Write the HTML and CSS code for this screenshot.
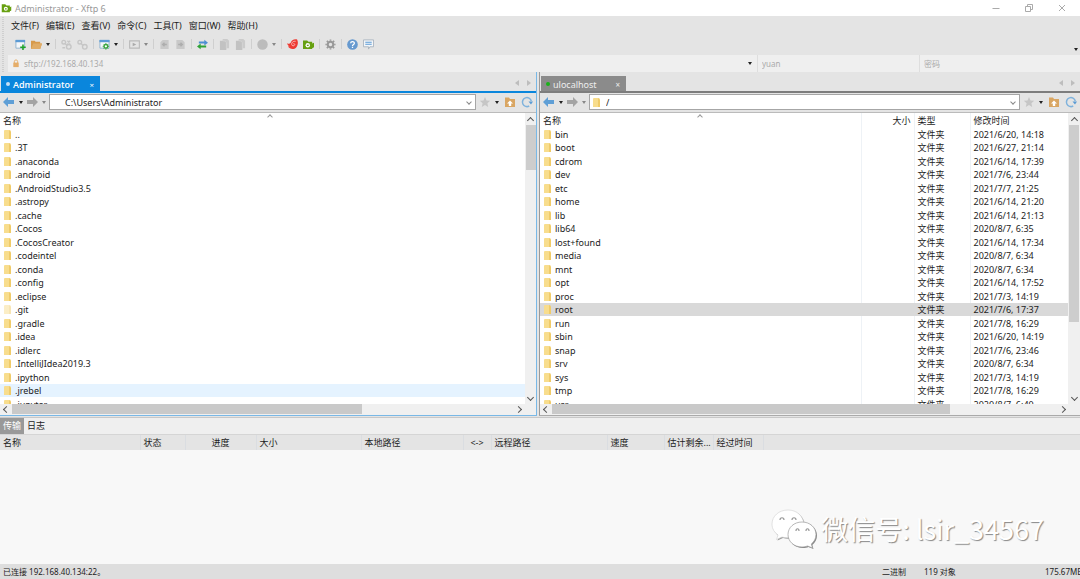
FILE: index.html
```html
<!DOCTYPE html>
<html lang="zh-CN">
<head>
<meta charset="utf-8">
<title>Administrator - Xftp 6</title>
<link rel="stylesheet" href="styles.css">
</head>
<body>
<svg class="defs" aria-hidden="true">
  <symbol id="left" viewBox="0 0 12 12"><path d="M0 6 5 1v3h6v4H5v3z" fill="currentColor"/></symbol>
  <symbol id="right" viewBox="0 0 12 12"><path d="M12 6 7 1v3H1v4h6v3z" fill="currentColor"/></symbol>
  <symbol id="star" viewBox="0 0 12 12"><path d="m6 1 1.500 3.400 3.700.4-2.800 2.500.8 3.700L6 9.100l-3.200 1.900.8-3.700L.8 4.800l3.700-.4z" fill="#c6c6c6"/></symbol>
  <symbol id="up" viewBox="0 0 12 12"><path d="M1 1.500h4l1 1.500h5v8H1z" fill="#d9a663"/><path d="m6 4.500 3 3H7.200V10H4.800V7.500H3z" fill="#fff"/></symbol>
  <symbol id="reload" viewBox="0 0 12 12"><path d="M8.200 10A4.500 4.500 0 1 1 10.300 5" fill="none" stroke="#7fb2dc" stroke-width="1.500"/><path d="M7.500 5.500H12L10 8.500z" fill="#5a9bd4"/></symbol>
  <symbol id="chain" viewBox="0 0 12 12"><g fill="none" stroke="#c6c6c6" stroke-width="1.500"><circle cx="3" cy="3.500" r="2"/><circle cx="8.500" cy="8.500" r="2.500"/><path d="m4.500 5 2 2"/></g></symbol>
  <symbol id="unchain" viewBox="0 0 12 12"><g fill="none" stroke="#c6c6c6" stroke-width="1.500"><circle cx="3" cy="3.500" r="2"/><circle cx="8.500" cy="8.500" r="2.500"/><path d="m4.500 5 2 2M7 2l3 3M10 2 7 5M1.500 9.500h3"/></g></symbol>
  <symbol id="doc" viewBox="0 0 12 12"><path d="M1.500 1H8l2.500 2.500V11h-9z" fill="#c9c9c9"/><path d="M3.500 6h4M6 4l2 2-2 2" fill="none" stroke="#adadad" stroke-width="1.500"/></symbol>
  <symbol id="copy" viewBox="0 0 12 12"><path d="M4 0h5l2 2v8H4z" fill="#cbcbcb"/><path d="M1 2h5l2 2v8H1z" fill="#c2c2c2"/><path d="M4 2h2l2 2v6" fill="none" stroke="#d4d4d4"/></symbol>
  <symbol id="folder-green" viewBox="0 0 12 12"><path d="M0 1.500h4.500L6 3h4v2l2-1v5l-2 1v1H0z" fill="#67a010"/><circle cx="5.200" cy="6.800" r="2.400" fill="#fff"/><path d="M4.200 6.200h2v1.500h-2z" fill="#67a010"/></symbol>
</svg>

<header class="titlebar">
  <svg class="app" viewBox="0 0 12 12"><use href="#folder-green"/></svg>
  <h1>Administrator - Xftp 6</h1>
  <div class="window-buttons">
    <button aria-label="最小化"><svg viewBox="0 0 12 12"><path d="M2.500 6.500h7"/></svg></button>
    <button aria-label="还原"><svg viewBox="0 0 12 12"><path d="M2.500 4.500h5v5h-5zM4.500 4V2.500h5v5H8"/></svg></button>
    <button aria-label="关闭"><svg viewBox="0 0 12 12"><path d="m3 3 6 6M9 3 3 9"/></svg></button>
  </div>
</header>

<div class="bars">
  <nav class="menubar">
    <button>文件(F)</button><button>编辑(E)</button><button>查看(V)</button><button>命令(C)</button><button>工具(T)</button><button>窗口(W)</button><button>帮助(H)</button>
  </nav>
  <div class="toolbar" role="toolbar">
    <button class="tool" aria-label="新建"><svg viewBox="0 0 12 12"><path d="M1 1.500h9.500V10H1z" fill="#f4f7fa" stroke="#8fb2cf"/><path d="M.5 1h10.500v2.500H.5z" fill="#5b9bd5"/><path d="M8.700 6v6M5.700 9h6" stroke="#1fa32b" stroke-width="1.700"/></svg></button>
    <button class="tool" aria-label="打开"><svg viewBox="0 0 12 12"><path d="M0 2h4l1 1h5v2h2l-2 6H0z" fill="#d79a4b"/><path d="M2.500 5H12l-2 6H0z" fill="#e0ac66"/></svg></button>
    <button class="caret" aria-label="打开选项"></button><i class="sep"></i>
    <button class="tool" aria-label="断开"><svg><use href="#unchain"/></svg></button>
    <button class="tool" aria-label="重新连接"><svg><use href="#chain"/></svg></button><i class="sep"></i>
    <button class="tool" aria-label="属性"><svg viewBox="0 0 12 12"><path d="M1 1.500h10V10H1z" fill="#f4f7fa" stroke="#8fb2cf"/><path d="M.5 1h11v2.500H.5z" fill="#5b9bd5"/><circle cx="7.500" cy="8" r="2" fill="#fff" stroke="#3ba640" stroke-width="1.500"/><path d="M7.500 4.500v1.300M7.500 10.200v1.500M4 8h1.300M9.700 8H11M5.200 5.700l.9.900M9 9.500l.9.900M9.900 5.700l-.9.900M6 9.500l-.9.900" stroke="#3ba640"/></svg></button>
    <button class="caret" aria-label="属性选项"></button><i class="sep"></i>
    <button class="tool" aria-label="运行"><svg viewBox="0 0 12 12"><path d="M.7 2h10.600v8H.7z" fill="none" stroke="#b9b9b9" stroke-width="1.200"/><path d="m4 4 4 2-4 2z" fill="#aaa"/></svg></button>
    <button class="caret dim" aria-label="运行选项"></button><i class="sep"></i>
    <button class="tool" aria-label="上传"><svg class="flip"><use href="#doc"/></svg></button>
    <button class="tool" aria-label="下载"><svg><use href="#doc"/></svg></button><i class="sep"></i>
    <button class="tool" aria-label="同步"><svg viewBox="0 0 12 12"><path d="M2 2.700h6V.8L12 4 8 7V5H2z" fill="#4c8ed2"/><path d="M10 7H4V5L0 8.300l4 3V9.400h6z" fill="#2fa336"/></svg></button><i class="sep"></i>
    <button class="tool" aria-label="复制"><svg><use href="#copy"/></svg></button>
    <button class="tool" aria-label="粘贴"><svg><use href="#copy"/></svg></button><i class="sep"></i>
    <button class="tool" aria-label="查看方式"><svg viewBox="0 0 12 12"><circle cx="6" cy="6" r="5.700" fill="#bcbcbc"/></svg></button>
    <button class="caret dim" aria-label="查看选项"></button><i class="sep"></i>
    <button class="tool" aria-label="Xshell"><svg viewBox="0 0 12 12"><path d="M0 4.500c2 1 3 .8 4-.5C5 1.500 7 0 11 .5c1.500 3 1 6.500-1 8.800C7.500 12 3 11.500 1 8l2 .2C1.500 7.500.5 6 0 4.500z" fill="#ee3a32"/><path d="M9.500 2.500C6.500 1.800 5 4 5 5.800s3 2.400 3.500.5c.2-1.300-1.300-1.700-1.800-.8" fill="none" stroke="#fbd0cd" stroke-width=".8"/></svg></button>
    <button class="tool" aria-label="Xftp"><svg><use href="#folder-green"/></svg></button><i class="sep"></i>
    <button class="tool" aria-label="选项"><svg viewBox="0 0 12 12"><circle cx="6" cy="6" r="3" fill="none" stroke="#999" stroke-width="2.200"/><path d="M6 .5V2M6 10v1.500M.5 6H2M10 6h1.500M2 2l1.200 1.200M8.800 8.800 10 10M10 2 8.800 3.200M3.200 8.800 2 10" stroke="#999" stroke-width="1.800"/></svg></button><i class="sep"></i>
    <button class="tool" aria-label="帮助"><svg viewBox="0 0 12 12"><circle cx="6" cy="6" r="5.800" fill="#6699cf"/><path d="M4 4.700c0-2.600 4-2.500 4-.2C8 6 6 6 6 7.500M6 8.500v1.300" fill="none" stroke="#fff" stroke-width="1.400"/></svg></button>
    <button class="tool" aria-label="反馈"><svg viewBox="0 0 12 12"><path d="M.5 1h11v7.500h-4L6 11V8.500H.5z" fill="#f3f6f9" stroke="#a9b4be"/><path d="M2.500 3.500h7M2.500 5.800h7" stroke="#5b9bd5" stroke-width="1.200"/></svg></button>
    <button class="caret more" aria-label="更多"></button>
  </div>
  <form class="address">
    <label class="host"><svg viewBox="0 0 8 10"><path d="M1 4h6v5H1z" fill="#e5ad69"/><path d="M2.200 4.500v-2c0-2 3.600-2 3.600 0v2" fill="none" stroke="#e5ad69"/></svg><input aria-label="主机" value="sftp://192.168.40.134"><button type="button" class="caret" aria-label="主机列表"></button></label>
    <input class="user" aria-label="用户名" value="yuan">
    <input class="password" type="password" aria-label="密码" placeholder="密码">
  </form>
</div>

<main class="panes">
  <section class="pane local">
    <div class="tabs"><button class="tab"><i class="dot"></i><span>Administrator</span><b>×</b></button><div class="pager"><button class="prev" aria-label="上一个"></button><button class="next" aria-label="下一个"></button></div></div>
    <div class="nav">
      <button class="arrow blue" aria-label="后退"><svg><use href="#left"/></svg></button><button class="caret" aria-label="后退记录"></button>
      <button class="arrow" aria-label="前进"><svg><use href="#right"/></svg></button><button class="caret dim" aria-label="前进记录"></button>
      <div class="path"><input aria-label="本地路径" value="C:\Users\Administrator"><button aria-label="路径列表"><i class="chev down"></i></button></div>
      <button class="tool" aria-label="收藏"><svg><use href="#star"/></svg></button><button class="caret" aria-label="收藏列表"></button>
      <button class="tool" aria-label="上级"><svg><use href="#up"/></svg></button><button class="tool" aria-label="刷新"><svg><use href="#reload"/></svg></button>
    </div>
    <div class="listing">
      <div class="files">
        <i class="chev sort"></i>
        <table>
          <thead><tr><th>名称</th></tr></thead>
          <tbody>
            <tr><td><i class="folder"></i>..</td></tr>
            <tr><td><i class="folder"></i>.3T</td></tr>
            <tr><td><i class="folder"></i>.anaconda</td></tr>
            <tr><td><i class="folder"></i>.android</td></tr>
            <tr><td><i class="folder"></i>.AndroidStudio3.5</td></tr>
            <tr><td><i class="folder"></i>.astropy</td></tr>
            <tr><td><i class="folder"></i>.cache</td></tr>
            <tr><td><i class="folder"></i>.Cocos</td></tr>
            <tr><td><i class="folder"></i>.CocosCreator</td></tr>
            <tr><td><i class="folder"></i>.codeintel</td></tr>
            <tr><td><i class="folder"></i>.conda</td></tr>
            <tr><td><i class="folder"></i>.config</td></tr>
            <tr><td><i class="folder"></i>.eclipse</td></tr>
            <tr><td><i class="folder faint"></i>.git</td></tr>
            <tr><td><i class="folder"></i>.gradle</td></tr>
            <tr><td><i class="folder"></i>.idea</td></tr>
            <tr><td><i class="folder"></i>.idlerc</td></tr>
            <tr><td><i class="folder"></i>.IntelliJIdea2019.3</td></tr>
            <tr><td><i class="folder"></i>.ipython</td></tr>
            <tr class="hover"><td><i class="folder"></i>.jrebel</td></tr>
            <tr><td><i class="folder"></i>.jupyter</td></tr>
          </tbody>
        </table>
      </div>
      <div class="vbar"><i class="chev up"></i><div class="track"><div class="thumb"></div></div><i class="chev down"></i></div>
    </div>
    <div class="hbar"><i class="chev back"></i><div class="track"><div class="thumb"></div></div><i class="chev fwd"></i></div>
  </section>

  <section class="pane remote">
    <div class="tabs"><button class="tab"><i class="dot"></i><span>ulocalhost</span><b>×</b></button><div class="pager"><button class="prev" aria-label="上一个"></button><button class="next" aria-label="下一个"></button></div></div>
    <div class="nav">
      <button class="arrow blue" aria-label="后退"><svg><use href="#left"/></svg></button><button class="caret" aria-label="后退记录"></button>
      <button class="arrow" aria-label="前进"><svg><use href="#right"/></svg></button><button class="caret dim" aria-label="前进记录"></button>
      <div class="path"><i class="folder"></i><input aria-label="远程路径" value="/"><button aria-label="路径列表"><i class="chev down"></i></button></div>
      <button class="tool" aria-label="收藏"><svg><use href="#star"/></svg></button><button class="caret" aria-label="收藏列表"></button>
      <button class="tool" aria-label="上级"><svg><use href="#up"/></svg></button><button class="tool" aria-label="刷新"><svg><use href="#reload"/></svg></button>
    </div>
    <div class="listing">
      <div class="files">
        <i class="chev sort"></i>
        <table>
          <colgroup><col><col class="c-size"><col class="c-type"><col class="c-time"></colgroup>
          <thead><tr><th>名称</th><th>大小</th><th>类型</th><th>修改时间</th></tr></thead>
          <tbody>
            <tr><td><i class="folder"></i>bin</td><td></td><td>文件夹</td><td>2021/6/20, 14:18</td></tr>
            <tr><td><i class="folder"></i>boot</td><td></td><td>文件夹</td><td>2021/6/27, 21:14</td></tr>
            <tr><td><i class="folder"></i>cdrom</td><td></td><td>文件夹</td><td>2021/6/14, 17:39</td></tr>
            <tr><td><i class="folder"></i>dev</td><td></td><td>文件夹</td><td>2021/7/6, 23:44</td></tr>
            <tr><td><i class="folder"></i>etc</td><td></td><td>文件夹</td><td>2021/7/7, 21:25</td></tr>
            <tr><td><i class="folder"></i>home</td><td></td><td>文件夹</td><td>2021/6/14, 21:20</td></tr>
            <tr><td><i class="folder"></i>lib</td><td></td><td>文件夹</td><td>2021/6/14, 21:13</td></tr>
            <tr><td><i class="folder"></i>lib64</td><td></td><td>文件夹</td><td>2020/8/7, 6:35</td></tr>
            <tr><td><i class="folder"></i>lost+found</td><td></td><td>文件夹</td><td>2021/6/14, 17:34</td></tr>
            <tr><td><i class="folder"></i>media</td><td></td><td>文件夹</td><td>2020/8/7, 6:34</td></tr>
            <tr><td><i class="folder"></i>mnt</td><td></td><td>文件夹</td><td>2020/8/7, 6:34</td></tr>
            <tr><td><i class="folder"></i>opt</td><td></td><td>文件夹</td><td>2021/6/14, 17:52</td></tr>
            <tr><td><i class="folder"></i>proc</td><td></td><td>文件夹</td><td>2021/7/3, 14:19</td></tr>
            <tr class="selected"><td><i class="folder"></i>root</td><td></td><td>文件夹</td><td>2021/7/6, 17:37</td></tr>
            <tr><td><i class="folder"></i>run</td><td></td><td>文件夹</td><td>2021/7/8, 16:29</td></tr>
            <tr><td><i class="folder"></i>sbin</td><td></td><td>文件夹</td><td>2021/6/20, 14:19</td></tr>
            <tr><td><i class="folder"></i>snap</td><td></td><td>文件夹</td><td>2021/7/6, 23:46</td></tr>
            <tr><td><i class="folder"></i>srv</td><td></td><td>文件夹</td><td>2020/8/7, 6:34</td></tr>
            <tr><td><i class="folder"></i>sys</td><td></td><td>文件夹</td><td>2021/7/3, 14:19</td></tr>
            <tr><td><i class="folder"></i>tmp</td><td></td><td>文件夹</td><td>2021/7/8, 16:29</td></tr>
            <tr><td><i class="folder"></i>usr</td><td></td><td>文件夹</td><td>2020/8/7, 6:40</td></tr>
          </tbody>
        </table>
      </div>
      <div class="vbar"><i class="chev up"></i><div class="track"><div class="thumb"></div></div><i class="chev down"></i></div>
    </div>
    <div class="hbar"><i class="chev back"></i><div class="track"><div class="thumb"></div></div><i class="chev fwd"></i></div>
  </section>
</main>

<section class="transfers">
  <div class="log-tabs"><button class="active">传输</button><button>日志</button></div>
  <table>
    <colgroup><col class="w-name"><col class="w-state"><col class="w-progress"><col class="w-size"><col class="w-local"><col class="w-dir"><col class="w-remote"><col class="w-speed"><col class="w-left"><col class="w-time"><col></colgroup>
    <thead><tr><th>名称</th><th>状态</th><th class="mid">进度</th><th>大小</th><th>本地路径</th><th class="mid">&lt;-&gt;</th><th>远程路径</th><th>速度</th><th>估计剩余...</th><th>经过时间</th><th></th></tr></thead>
  </table>
  <div class="watermark">
    <svg viewBox="0 0 46 40"><g fill="#999"><path d="M18 2C9 2 2 8 2 16c0 5 2.500 8.500 6 11l-1.500 4.500L12 29c7 2 21 0 22-13C33 8 27 2 18 2z"/></g><g fill="#fff" stroke="#d0d0d0" stroke-width=".6"><path d="M17 1C8 1 1 7 1 15c0 5 2.500 8.500 6 11l-1.500 4.500L11 28c7 2 21 0 22-13C32 7 26 1 17 1z"/></g><path d="M32 14c-8 0-14 5.500-14 12.500S24 39 32 39c2 0 4-.3 5.500-1l5 2-1.200-4c3-2.500 4.700-5.500 4.700-9.500C46 19.500 40 14 32 14z" fill="#888"/><path d="M31 13c-8 0-14 5.500-14 12.500S23 38 31 38c2 0 4-.3 5.500-1l5 2-1.200-4c3-2.500 4.700-5.500 4.700-9.500C45 18.500 39 13 31 13z" fill="#fff" stroke="#999" stroke-width=".7"/><g fill="none" stroke="#999" stroke-width="1.200"><path d="M9 11c0-3 4-3 4 0M21 11c0-3 4-3 4 0M25 22c0-3 3-3 3 0M35 22c0-3 3-3 3 0"/></g></svg>
    <span>微信号: lsir_34567</span>
  </div>
</section>

<footer class="status"><span class="grow">已连接 192.168.40.134:22。</span><span class="mode">二进制</span><span class="count">119 对象</span><span class="bytes">175.67MB</span></footer>
</body>
</html>
```

FILE: styles.css
```css
* { box-sizing: border-box; }

body {
  margin: 0;
  height: 100vh;
  display: flex;
  flex-direction: column;
  overflow: hidden;
  background: #e4e4e4;
  color: #1c1c1c;
  font: 9px/13px "Noto Sans", "Noto Sans CJK SC", sans-serif;
}

button, input {
  margin: 0;
  padding: 0;
  border: 0;
  background: none;
  color: inherit;
  font: inherit;
  min-width: 0;
}

button { flex: none; }
svg { display: block; width: 12px; height: 12px; }
.defs { position: absolute; width: 0; height: 0; }
.flip { transform: scaleX(-1); }

/* Title bar */
.titlebar {
  display: flex;
  align-items: center;
  height: 16px;
  padding-left: 1px;
  gap: 3px;
  background: #fff;
  color: #999;
}
.titlebar h1 { flex: 1; margin: 0; font-size: 9px; font-weight: 400; }
.app { width: 11px; height: 10px; }
.window-buttons { display: flex; padding-right: 2px; }
.window-buttons button { width: 33px; display: flex; justify-content: center; }
.window-buttons path { fill: none; stroke: #aaa; }

/* Menu, toolbar, address */
.bars {
  flex: none;
  padding-left: 8px;
  background: repeating-linear-gradient(#e4e4e4 0 1px, #cfcfcf 1px 2px) 2px 0 / 2px 100% no-repeat;
}
.menubar { display: flex; height: 17px; gap: 7px; padding: 2px 0 0 3px; }
.toolbar { display: flex; align-items: center; height: 22px; padding-left: 4px; }
.tool { width: 16px; display: flex; justify-content: center; }
.toolbar svg { width: 11px; height: 11px; }
.sep { flex: none; width: 6px; height: 10px; background: linear-gradient(#cfcfcf, #cfcfcf) center / 1px 100% no-repeat; }
.caret { width: 8px; height: 12px; display: flex; align-items: center; justify-content: center; }
.caret::after { content: ""; border: 2px solid transparent; border-top: 3px solid #222; border-bottom: 0; }
.caret.dim::after { border-top-color: #888; }
.more { margin-left: auto; align-self: flex-end; }
.address {
  display: grid;
  grid-template-columns: 749fr 162fr 161fr;
  height: 17px;
  background: #efefef;
  color: #aaa;
  font-size: 8px;
}
.host { display: flex; align-items: center; gap: 4px; padding: 0 3px 0 4px; }
.host svg { width: 8px; height: 9px; }
.host input { flex: 1; }
.user, .password { border-left: 1px solid #dedede; padding-left: 4px; }
.password::placeholder { color: #aaa; }

/* File panes */
.panes { flex: 345 1 0; min-height: 0; display: grid; grid-template-columns: 537fr 541fr; gap: 2px; padding-bottom: 1px; }
.pane { min-width: 0; min-height: 0; display: flex; flex-direction: column; border-right: 1px solid #9a9a9a; border-bottom: 1px solid #aaa; --accent: #8b8b8b; }
.local { border-color: #79b8e6; --accent: #0a86dc; }
.remote { border-left: 1px solid #9a9a9a; border-right: 0; }
.tabs { flex: none; display: flex; align-items: flex-end; height: 21px; padding-left: 1px; border-bottom: 2px solid var(--accent); }
.remote .tabs { border-color: #7d7d7d; }
.tab { display: flex; align-items: center; gap: 3px; width: 99px; height: 15px; padding: 1px 6px 0 5px; background: var(--accent); color: #fff; text-align: left; }
.remote .tab { width: 85px; color: #eee; }
.local .tab { font-family: "Open Sans", sans-serif; font-weight: 600; }
.tab span { flex: 1; }
.tab b { font-weight: 400; font-size: 8px; }
.dot { width: 4px; height: 4px; border-radius: 50%; background: #c5dff5; }
.remote .dot { background: #19b219; }
.pager { display: flex; gap: 8px; margin-left: auto; padding: 0 5px 5px 0; }
.prev, .next { border: 3px solid transparent; }
.prev { border-left: 0; border-right: 4px solid #bdbdbd; }
.next { border-right: 0; border-left: 4px solid #bdbdbd; }
.nav { flex: none; display: flex; align-items: center; height: 20px; padding: 0 1px 1px 3px; border-bottom: 1px solid #bbb; }
.nav .tool { width: 17px; }
.arrow { width: 12px; color: #a4a4a4; }
.arrow.blue { color: #5f9fd6; }
.nav .arrow + .caret { width: 11px; }
.path { flex: 1; min-width: 0; display: flex; align-items: center; height: 16px; background: #fff; border: 1px solid #a6a6a6; }
.path input { flex: 1; padding-left: 15px; }
.remote .path input { padding-left: 6px; }
.remote .path { padding-left: 3px; }
.path button { width: 12px; height: 13px; display: flex; justify-content: center; align-items: center; }
.folder { display: inline-block; flex: none; width: 7px; height: 9px; background: linear-gradient(90deg, #f8dd8d 0 5px, #f0cb69 5px 7px); border-radius: 1px 2px 0 0; }
.faint { opacity: .5; }
.listing { flex: 1; min-height: 0; display: flex; background: #fff; }
.files { position: relative; flex: 1; overflow: hidden; }
table { width: 100%; table-layout: fixed; border-collapse: collapse; }
th { padding: 0 0 0 3px; font-weight: 400; text-align: left; white-space: nowrap; overflow: hidden; }
td { padding: 0 0 0 3px; white-space: nowrap; }
.files th { height: 14px; }
.files tr:nth-child(odd) { height: 14px; }
.files tr:nth-child(even) { height: 13px; }
.files td .folder { margin-right: 4px; vertical-align: -1px; }
.files td:first-child { padding-left: 4px; }
.c-size { width: 53px; }
.c-type { width: 56px; }
.c-time { width: 98px; }
.remote td + td, .remote th + th { border-left: 1px solid #eef2f6; }
.remote .selected td { border-color: #d9d9d9; }
.remote th:nth-child(2) { text-align: right; padding-right: 3px; }
.hover { background: #e5f3ff; }
.selected { background: #d9d9d9; }

/* Scroll bars */
.chev { flex: none; display: block; width: 5px; height: 5px; border: solid #555; border-width: 1px 0 0 1px; transform: rotate(45deg); }
.chev.down { transform: rotate(225deg); }
.chev.back { transform: rotate(-45deg); }
.chev.fwd { transform: rotate(135deg); }
.path .chev { width: 4px; height: 4px; border-color: #888; }
.sort { position: absolute; left: 51%; top: 2px; width: 4px; height: 4px; border-color: #999; }
.remote .sort { left: 30%; }
.vbar { flex: none; width: 11px; display: flex; flex-direction: column; align-items: center; padding: 5px 0 4px; background: #f0f0f0; }
.remote .vbar { width: 12px; }
.vbar .track { flex: 1; width: 10px; padding: 2px 0 4px; }
.vbar .thumb { height: 17%; background: #cdcdcd; }
.remote .vbar .thumb { height: 74%; }
.hbar { flex: none; height: 11px; display: flex; align-items: center; padding: 0 15px 0 4px; background: #f0f0f0; }
.hbar .track { flex: 1; height: 10px; padding: 0 4px 0 3px; }
.hbar .thumb { width: 70%; height: 10px; background: #c9c9c9; }
.remote .hbar .thumb { width: 79%; }

/* Transfer list */
.transfers { position: relative; flex: 147 1 0; min-height: 0; background: #f8f8f8; border-top: 1px solid #c8c8c8; }
.log-tabs { display: flex; height: 17px; background: #efefef; border-bottom: 1px solid #d5d5d5; }
.log-tabs button { width: 24px; }
.log-tabs .active { background: #999; color: #fff; }
.transfers table { background: #e4e4e4; }
.transfers th { height: 15px; }
.transfers th + th { border-left: 1px solid #dadde1; }
.transfers .mid { text-align: center; padding: 0; }
.w-name { width: 140px; }
.w-state { width: 45px; }
.w-progress { width: 71px; }
.w-size { width: 105px; }
.w-local { width: 102px; }
.w-dir { width: 28px; }
.w-remote { width: 116px; }
.w-speed { width: 57px; }
.w-left { width: 49px; }
.w-time { width: 50px; }
.watermark { position: absolute; right: 36px; bottom: 15px; display: flex; align-items: center; gap: 4px; }
.watermark svg { width: 46px; height: 40px; }
.watermark span { color: #fff; font: 27px/40px "Noto Sans CJK SC", sans-serif; text-shadow: 1px 1px 1px #888; white-space: nowrap; }

.status { flex: none; display: flex; align-items: center; height: 15px; padding-left: 3px; background: #dedede; font-size: 8px; white-space: nowrap; }
.grow { flex: 1; }
.mode { width: 42px; }
.count { width: 121px; }
.bytes { width: 35px; }
```
